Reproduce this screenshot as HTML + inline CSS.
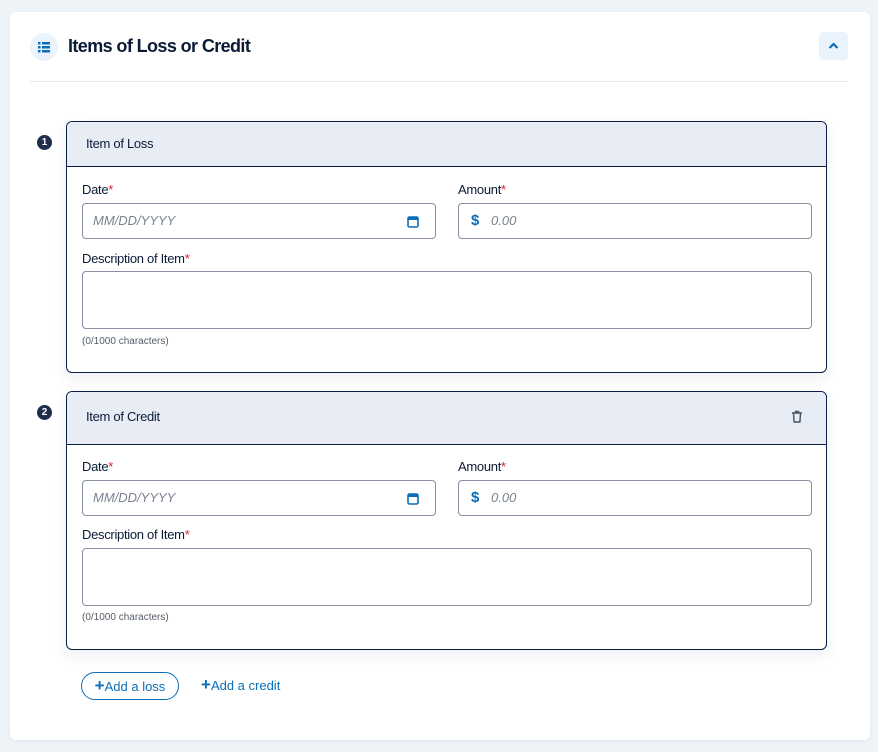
<!DOCTYPE html>
<html><head><style>
*{box-sizing:border-box;margin:0;padding:0}
body{width:878px;height:752px;background:#eef3f8;font-family:"Liberation Sans",sans-serif;position:relative;overflow:hidden;color:#0b1b36}
.card{position:absolute;left:10px;top:12px;width:860px;height:728px;background:#fff;border-radius:6px;box-shadow:0 1px 3px rgba(0,0,0,.05)}
.abs{position:absolute}
.ico{left:30px;top:33px;width:28px;height:28px;border-radius:50%;background:#eaf3fc}
.chev{left:819px;top:32px;width:29px;height:28px;border-radius:4px;background:#eaf3fc}
.div{left:30px;top:81px;width:818px;height:1px;background:#e6e9ef}
.num{width:15px;height:15px;border-radius:50%;background:#1e2e4c;color:#fff;font-size:10px;font-weight:bold;text-align:center;line-height:15px}
.item{left:66px;width:761px;border:1px solid #0b1f45;border-radius:6px;background:#fff;overflow:hidden;box-shadow:0 6px 14px rgba(30,60,120,.08)}
.ih{background:#e8edf5;border-bottom:1px solid #0b1f45;font-size:13px;padding-left:19px;letter-spacing:-.3px}
.lab{font-size:13px;letter-spacing:-.3px}
.lab b{color:#d8232a;font-weight:normal}
.inp{height:36px;border:1px solid #8790a0;border-radius:4px;font-size:13px;color:#7a8290;font-style:italic;line-height:34px}
.ta{height:58px;border:1px solid #8790a0;border-radius:4px}
.cnt{font-size:10px;color:#555d6a}
.btn{left:81px;top:672px;width:98px;height:28px;border:1px solid #0a6fb8;border-radius:14px;color:#0a6fb8;font-size:13px;text-align:center;line-height:26px}
.lnk{left:201px;top:678px;color:#0a6fb8;font-size:13px}
</style></head><body>
<div class="card"></div>
<div class="abs ico"><svg width="28" height="28" viewBox="0 0 28 28"><g fill="#0a6fb8"><rect x="8" y="9" width="2.5" height="2.5"/><rect x="8" y="13" width="2.5" height="2.5"/><rect x="8" y="17" width="2.5" height="2.5"/><rect x="12" y="9" width="8" height="2.5"/><rect x="12" y="13" width="8" height="2.5"/><rect x="12" y="17" width="8" height="2.5"/></g></svg></div>
<div class="abs" style="left:68px;top:36px;font-size:18px;font-weight:bold;letter-spacing:-.6px">Items of Loss or Credit</div>
<div class="abs chev"><svg width="29" height="28" viewBox="0 0 29 28"><path d="M10.5 16l4-4 4 4" stroke="#0a6fb8" stroke-width="2.2" fill="none"/></svg></div>
<div class="abs div"></div>

<div class="abs num" style="left:37px;top:135px">1</div>
<div class="abs item" style="top:121px;height:252px">
 <div class="ih" style="height:45px;line-height:44px">Item of Loss</div>
</div>
<div class="abs lab" style="left:82px;top:182px">Date<b>*</b></div>
<div class="abs inp" style="left:82px;top:203px;width:354px;padding-left:10px">MM/DD/YYYY
 <svg class="abs" style="left:324px;top:11px" width="12" height="13" viewBox="0 0 12 13"><rect x="1" y="2" width="10" height="10" rx="1.5" fill="none" stroke="#0a6fb8" stroke-width="1.6"/><rect x="1" y="2" width="10" height="3" fill="#0a6fb8"/></svg></div>
<div class="abs lab" style="left:458px;top:182px">Amount<b>*</b></div>
<div class="abs inp" style="left:458px;top:203px;width:354px;padding-left:32px">0.00<span class="abs" style="left:12px;top:0;font-style:normal;font-weight:bold;color:#0a6fb8;font-size:15px">$</span></div>
<div class="abs lab" style="left:82px;top:251px">Description of Item<b>*</b></div>
<div class="abs ta" style="left:82px;top:271px;width:730px"></div>
<div class="abs cnt" style="left:82px;top:336px">(0/1000 characters)</div>

<div class="abs num" style="left:37px;top:405px">2</div>
<div class="abs item" style="top:391px;height:259px">
 <div class="ih" style="height:53px;line-height:50px">Item of Credit</div>
</div>
<svg class="abs" style="left:791px;top:410px" width="12" height="14" viewBox="0 0 12 14"><path d="M1 3h10M4.5 3V1.5h3V3M2.5 3.5l.6 8.5h5.8l.6-8.5" fill="none" stroke="#4a5568" stroke-width="1.5"/></svg>
<div class="abs lab" style="left:82px;top:459px">Date<b>*</b></div>
<div class="abs inp" style="left:82px;top:480px;width:354px;padding-left:10px">MM/DD/YYYY
 <svg class="abs" style="left:324px;top:11px" width="12" height="13" viewBox="0 0 12 13"><rect x="1" y="2" width="10" height="10" rx="1.5" fill="none" stroke="#0a6fb8" stroke-width="1.6"/><rect x="1" y="2" width="10" height="3" fill="#0a6fb8"/></svg></div>
<div class="abs lab" style="left:458px;top:459px">Amount<b>*</b></div>
<div class="abs inp" style="left:458px;top:480px;width:354px;padding-left:32px">0.00<span class="abs" style="left:12px;top:0;font-style:normal;font-weight:bold;color:#0a6fb8;font-size:15px">$</span></div>
<div class="abs lab" style="left:82px;top:527px">Description of Item<b>*</b></div>
<div class="abs ta" style="left:82px;top:548px;width:730px"></div>
<div class="abs cnt" style="left:82px;top:612px">(0/1000 characters)</div>

<div class="abs btn"><span style="font-size:17px;font-weight:bold">+</span>Add a loss</div>
<div class="abs lnk"><span style="font-size:17px;font-weight:bold;line-height:13px">+</span>Add a credit</div>
</body></html>
